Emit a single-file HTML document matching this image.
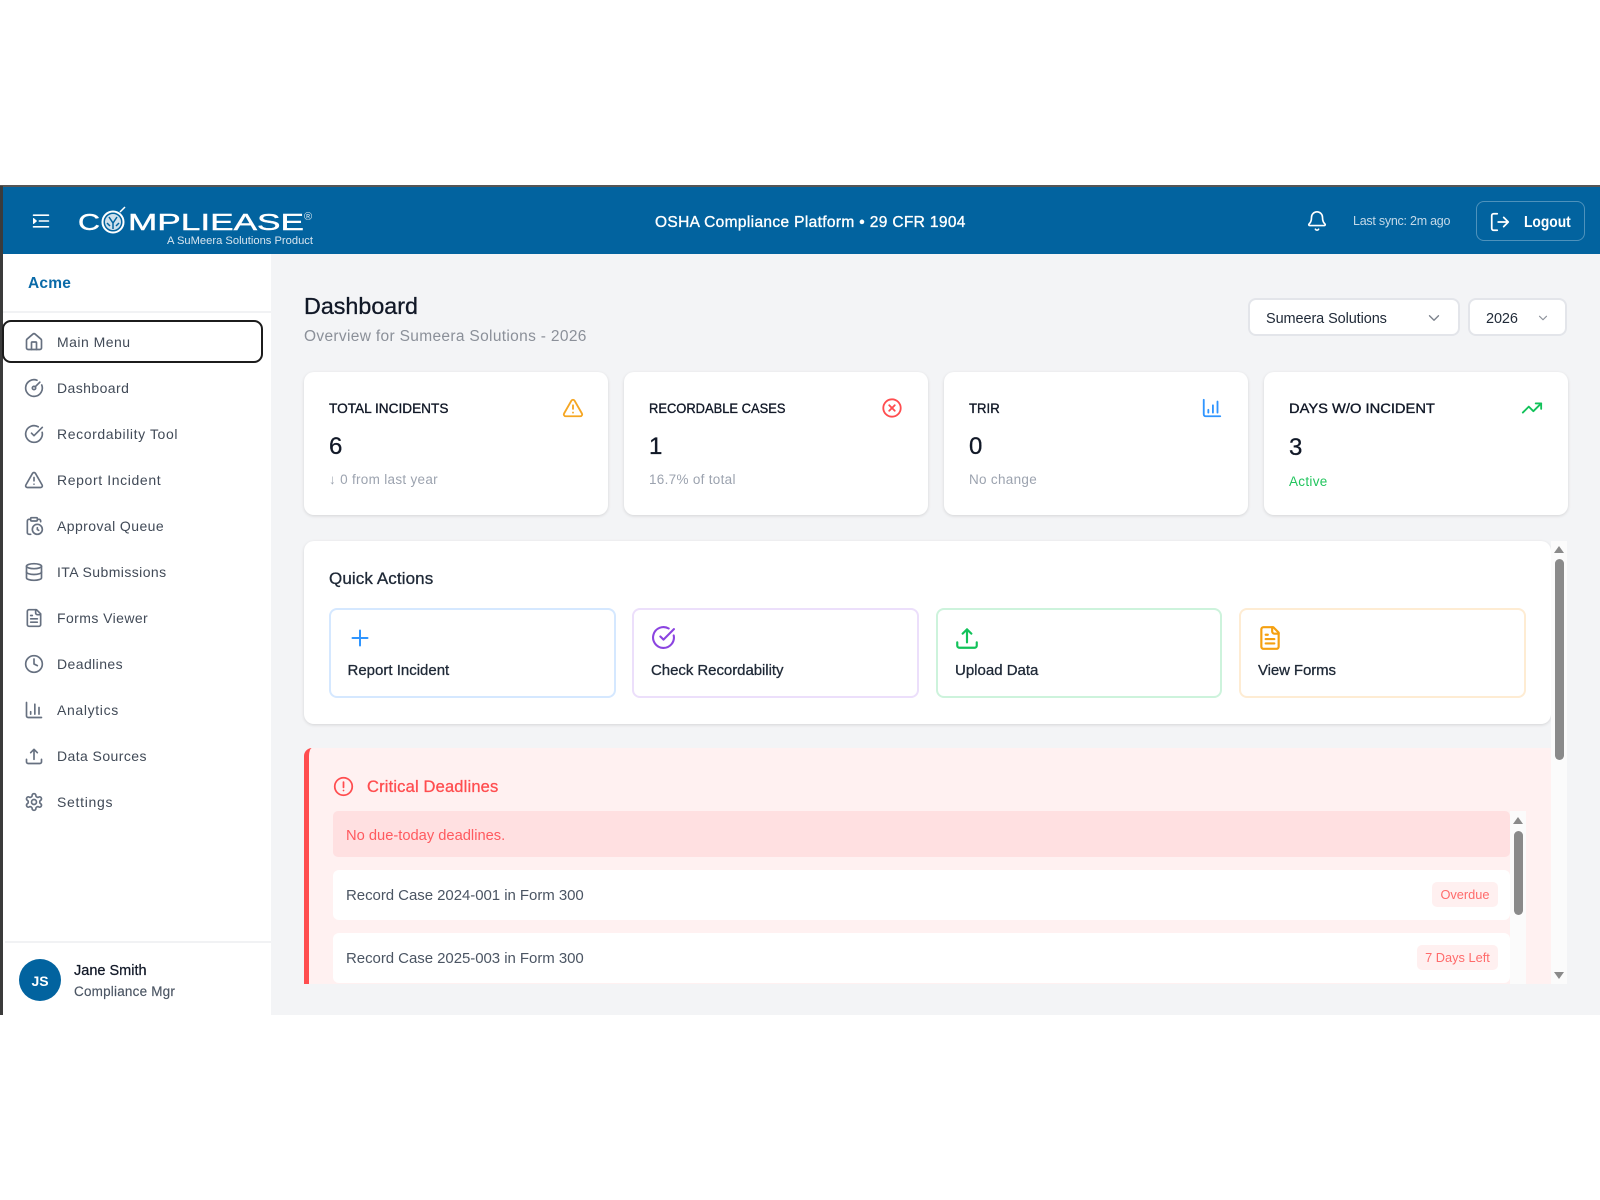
<!DOCTYPE html>
<html lang="en">
<head>
<meta charset="utf-8">
<title>CompliEase Dashboard</title>
<style>
*{box-sizing:border-box;margin:0;padding:0}
html,body{width:1600px;height:1200px;background:#fff;overflow:hidden}
body{position:relative;font-family:"Liberation Sans",sans-serif;color:#1f2937;filter:blur(.35px)}
.a{position:absolute}
.t{position:absolute;line-height:20px;white-space:nowrap;transform-origin:left center}
svg.i{position:absolute;fill:none;stroke:currentColor;stroke-width:2;stroke-linecap:round;stroke-linejoin:round}
.nav{font-size:14px;letter-spacing:.42px;color:#414a57}
.nico{color:#667080;width:20px;height:20px;left:24px}
.card{position:absolute;top:372px;width:304px;height:143px;background:#fff;border-radius:10px;box-shadow:0 1px 3px rgba(0,0,0,.13)}
.lab{font-size:14px;font-weight:400;color:#111827;-webkit-text-stroke:.35px #111827}
.num{font-size:24px;color:#111827;-webkit-text-stroke:.3px #111827}
.sub{font-size:13.5px;color:#9ca3af;letter-spacing:.3px}
.qa{position:absolute;top:608px;height:90px;background:#fff;border:2px solid;border-radius:8px}
.ql{font-size:15px;color:#1f2937;-webkit-text-stroke:.3px #1f2937}
.row{position:absolute;left:333px;width:1177px;height:50px;background:#fff;border-radius:6px}
.rt{font-size:15px;color:#4b5563;letter-spacing:-.05px}
.badge{position:absolute;height:25px;background:#fff0f0;border-radius:5px;color:#ff6b6b;font-size:12.8px;line-height:26px;text-align:center}
.sel{position:absolute;top:298px;height:38px;background:#fff;border:2px solid #e3e5ea;border-radius:8px}
.st{font-size:14.5px;color:#1f2937;letter-spacing:-.1px}
</style>
</head>
<body>
<!-- app frame -->
<div class="a" style="left:0;top:186px;width:1600px;height:829px;background:#f3f4f6"></div>
<div class="a" style="left:0;top:185px;width:1600px;height:2px;background:#555"></div>
<!-- sidebar -->
<div class="a" style="left:0;top:254px;width:271px;height:761px;background:#fff"></div>
<div class="a" style="left:0;top:186px;width:2.5px;height:829px;background:#3b3b3b"></div>
<!-- header -->
<div class="a" style="left:2.5px;top:187px;width:1597.5px;height:67px;background:#02639f"></div>

<svg class="i" style="left:31px;top:211px;color:#fff;stroke-width:1.9" width="20" height="20" viewBox="0 0 24 24"><path d="M3 5h18M10 12h11M3 19h18"/><path d="M3 9l3.5 3L3 15z" fill="#fff" stroke-width="1.2"/></svg>

<!-- logo -->
<svg class="a" style="left:70px;top:200px" width="260" height="50" viewBox="0 0 260 50">
  <g fill="#fff" stroke="#fff" stroke-width=".4" font-family="'Liberation Sans',sans-serif" font-size="23.5">
    <text x="8" y="30" textLength="22" lengthAdjust="spacingAndGlyphs">C</text>
    <text x="58" y="30" textLength="176" lengthAdjust="spacingAndGlyphs">MPLIEASE</text>
  </g>
  <circle cx="43" cy="22" r="10.5" fill="none" stroke="#fff" stroke-width="2"/>
  <circle cx="43" cy="22" r="8" fill="#cfe0ec"/>
  <path d="M39 17l4 6 4-6M43 23v6M37 23l3 3M49 23l-3 3" stroke="#02639f" stroke-width="1.5" fill="none"/>
  <path d="M50 12l5-5" stroke="#fff" stroke-width="1.5"/>
  <text x="234" y="20" fill="#dce8f1" font-family="'Liberation Sans',sans-serif" font-size="11">®</text>
  <text x="97" y="44" fill="#d8e5ef" font-family="'Liberation Sans',sans-serif" font-size="11" textLength="146" lengthAdjust="spacingAndGlyphs">A SuMeera Solutions Product</text>
</svg>

<div class="t" style="left:655px;top:213px;font-size:15.5px;color:#fff;-webkit-text-stroke:.35px #fff;letter-spacing:.35px">OSHA Compliance Platform • 29 CFR 1904</div>

<svg class="i" style="left:1306px;top:210px;color:#fff;stroke-width:1.8" width="22" height="22" viewBox="0 0 24 24"><path d="M10.268 21a2 2 0 0 0 3.464 0"/><path d="M3.262 15.326A1 1 0 0 0 4 17h16a1 1 0 0 0 .74-1.673C19.41 13.956 18 12.499 18 8A6 6 0 0 0 6 8c0 4.499-1.411 5.956-2.738 7.326"/></svg>
<div class="t" style="left:1353px;top:211px;font-size:12.5px;color:#c4d9e8;letter-spacing:-.25px">Last sync: 2m ago</div>
<div class="a" style="left:1476px;top:201px;width:109px;height:40px;border:1.5px solid rgba(255,255,255,.3);border-radius:8px"></div>
<svg class="i" style="left:1489px;top:211px;color:#fff;stroke-width:1.9" width="22" height="22" viewBox="0 0 24 24"><path d="M9 3H5a2 2 0 0 0-2 2v14a2 2 0 0 0 2 2h4"/><path d="M10 12h11M16 7l5 5-5 5"/></svg>
<div class="t" style="left:1524px;top:213px;font-size:15.5px;color:#fff;font-weight:700;transform:scaleX(.89)">Logout</div>

<!-- sidebar content -->
<div class="t" style="left:28px;top:274px;font-size:15.5px;font-weight:700;color:#0a6aa8;letter-spacing:.2px">Acme</div>
<div class="a" style="left:3px;top:311px;width:268px;height:2px;background:#f1f2f4"></div>
<div class="a" style="left:2px;top:320px;width:261px;height:43px;border:2px solid #1c1c1c;border-radius:9px"></div>

<div class="t nav" style="left:57px;top:332px;letter-spacing:.47px">Main Menu</div>
<div class="t nav" style="left:57px;top:378px">Dashboard</div>
<div class="t nav" style="left:57px;top:424px;letter-spacing:.6px">Recordability Tool</div>
<div class="t nav" style="left:57px;top:470px;letter-spacing:.62px">Report Incident</div>
<div class="t nav" style="left:57px;top:516px">Approval Queue</div>
<div class="t nav" style="left:57px;top:562px">ITA Submissions</div>
<div class="t nav" style="left:57px;top:608px">Forms Viewer</div>
<div class="t nav" style="left:57px;top:654px">Deadlines</div>
<div class="t nav" style="left:57px;top:700px;letter-spacing:.65px">Analytics</div>
<div class="t nav" style="left:57px;top:746px">Data Sources</div>
<div class="t nav" style="left:57px;top:792px;letter-spacing:.7px">Settings</div>

<svg class="i nico" style="top:332px" viewBox="0 0 24 24"><path d="M15 21v-8a1 1 0 0 0-1-1h-4a1 1 0 0 0-1 1v8"/><path d="M3 10a2 2 0 0 1 .709-1.528l7-5.999a2 2 0 0 1 2.582 0l7 5.999A2 2 0 0 1 21 10v9a2 2 0 0 1-2 2H5a2 2 0 0 1-2-2z"/></svg>
<svg class="i nico" style="top:378px" viewBox="0 0 24 24"><path d="M15.6 2.7a10 10 0 1 0 5.7 5.7"/><circle cx="12" cy="12" r="2"/><path d="M13.4 10.6 19 5"/></svg>
<svg class="i nico" style="top:424px" viewBox="0 0 24 24"><path d="M21.801 10A10 10 0 1 1 17 3.335"/><path d="m9 11 3 3L22 4"/></svg>
<svg class="i nico" style="top:470px" viewBox="0 0 24 24"><path d="m21.73 18-8-14a2 2 0 0 0-3.48 0l-8 14A2 2 0 0 0 4 21h16a2 2 0 0 0 1.73-3"/><path d="M12 9v4M12 17h.01"/></svg>
<svg class="i nico" style="top:516px" viewBox="0 0 24 24"><path d="M16 14v2.2l1.6 1"/><path d="M16 4h2a2 2 0 0 1 2 2v.832"/><path d="M8 4H6a2 2 0 0 0-2 2v14a2 2 0 0 0 2 2h2"/><circle cx="16" cy="16" r="6"/><rect x="8" y="2" width="8" height="4" rx="1"/></svg>
<svg class="i nico" style="top:562px" viewBox="0 0 24 24"><ellipse cx="12" cy="5" rx="9" ry="3"/><path d="M3 5V19A9 3 0 0 0 21 19V5"/><path d="M3 12A9 3 0 0 0 21 12"/></svg>
<svg class="i nico" style="top:608px" viewBox="0 0 24 24"><path d="M15 2H6a2 2 0 0 0-2 2v16a2 2 0 0 0 2 2h12a2 2 0 0 0 2-2V7Z"/><path d="M14 2v4a2 2 0 0 0 2 2h4"/><path d="M10 9H8M16 13H8M16 17H8"/></svg>
<svg class="i nico" style="top:654px" viewBox="0 0 24 24"><circle cx="12" cy="12" r="10"/><path d="M12 6v6l4 2"/></svg>
<svg class="i nico" style="top:700px" viewBox="0 0 24 24"><path d="M3 3v16a2 2 0 0 0 2 2h16"/><path d="M18 17V9M13 17V5M8 17v-3"/></svg>
<svg class="i nico" style="top:746px" viewBox="0 0 24 24"><path d="M3 16v3a2 2 0 0 0 2 2h14a2 2 0 0 0 2-2v-3"/><path d="M12 16V4M8 8l4-4 4 4"/></svg>
<svg class="i nico" style="top:792px" viewBox="0 0 24 24"><path d="M12.22 2h-.44a2 2 0 0 0-2 2v.18a2 2 0 0 1-1 1.73l-.43.25a2 2 0 0 1-2 0l-.15-.08a2 2 0 0 0-2.73.73l-.22.38a2 2 0 0 0 .73 2.73l.15.1a2 2 0 0 1 1 1.72v.51a2 2 0 0 1-1 1.74l-.15.09a2 2 0 0 0-.73 2.73l.22.38a2 2 0 0 0 2.73.73l.15-.08a2 2 0 0 1 2 0l.43.25a2 2 0 0 1 1 1.73V20a2 2 0 0 0 2 2h.44a2 2 0 0 0 2-2v-.18a2 2 0 0 1 1-1.73l.43-.25a2 2 0 0 1 2 0l.15.08a2 2 0 0 0 2.73-.73l.22-.39a2 2 0 0 0-.73-2.73l-.15-.08a2 2 0 0 1-1-1.74v-.5a2 2 0 0 1 1-1.74l.15-.09a2 2 0 0 0 .73-2.73l-.22-.38a2 2 0 0 0-2.73-.73l-.15.08a2 2 0 0 1-2 0l-.43-.25a2 2 0 0 1-1-1.73V4a2 2 0 0 0-2-2z"/><circle cx="12" cy="12" r="3"/></svg>

<div class="a" style="left:5px;top:941px;width:266px;height:2px;background:#f1f2f4"></div>
<div class="a" style="left:19px;top:959px;width:42px;height:42px;border-radius:50%;background:#02639f;color:#fff;font-size:14px;font-weight:700;line-height:44px;text-align:center">JS</div>
<div class="t" style="left:74px;top:961px;font-size:14.5px;color:#111827;-webkit-text-stroke:.25px #111827">Jane Smith</div>
<div class="t" style="left:74px;top:982px;font-size:13.5px;color:#4b5563;letter-spacing:.2px;-webkit-text-stroke:.15px #4b5563">Compliance Mgr</div>

<!-- page head -->
<div class="t" style="left:304px;top:296px;font-size:23.3px;color:#111827;-webkit-text-stroke:.3px #111827">Dashboard</div>
<div class="t" style="left:304px;top:327px;font-size:15.5px;color:#8b9099;letter-spacing:.33px">Overview for Sumeera Solutions - 2026</div>

<div class="sel" style="left:1248px;width:212px"></div>
<div class="t st" style="left:1266px;top:309px">Sumeera Solutions</div>
<svg class="i" style="left:1425px;top:309px;color:#7b818b;stroke-width:1.8" width="18" height="18" viewBox="0 0 24 24"><path d="m6 9 6 6 6-6"/></svg>
<div class="sel" style="left:1468px;width:99px"></div>
<div class="t st" style="left:1486px;top:309px">2026</div>
<svg class="i" style="left:1536px;top:311px;color:#8b9099;stroke-width:2" width="14" height="14" viewBox="0 0 24 24"><path d="m6 9 6 6 6-6"/></svg>

<!-- stat cards -->
<div class="card" style="left:304px"></div>
<div class="card" style="left:624px"></div>
<div class="card" style="left:944px"></div>
<div class="card" style="left:1264px"></div>

<div class="t lab" style="left:329px;top:398px;transform:scaleX(.974)">TOTAL INCIDENTS</div>
<div class="t num" style="left:329px;top:437px">6</div>
<div class="t sub" style="left:329px;top:470px">↓ 0 from last year</div>
<svg class="i" style="left:562px;top:397px;color:#f5a623" width="22" height="22" viewBox="0 0 24 24"><path d="m21.73 18-8-14a2 2 0 0 0-3.48 0l-8 14A2 2 0 0 0 4 21h16a2 2 0 0 0 1.73-3"/><path d="M12 9v4M12 17h.01"/></svg>

<div class="t lab" style="left:649px;top:398px;transform:scaleX(.923)">RECORDABLE CASES</div>
<div class="t num" style="left:649px;top:437px">1</div>
<div class="t sub" style="left:649px;top:470px">16.7% of total</div>
<svg class="i" style="left:881px;top:397px;color:#ff4d4f" width="22" height="22" viewBox="0 0 24 24"><circle cx="12" cy="12" r="9.5"/><path d="m15 9-6 6M9 9l6 6"/></svg>

<div class="t lab" style="left:969px;top:398px;transform:scaleX(.94)">TRIR</div>
<div class="t num" style="left:969px;top:437px">0</div>
<div class="t sub" style="left:969px;top:470px">No change</div>
<svg class="i" style="left:1201px;top:397px;color:#2f95ff" width="22" height="22" viewBox="0 0 24 24"><path d="M3 3v16a2 2 0 0 0 2 2h16"/><path d="M18 17V5M13 17V9M8 17v-3"/></svg>

<div class="t lab" style="left:1289px;top:398px;transform:scaleX(1.05)">DAYS W/O INCIDENT</div>
<div class="t num" style="left:1289px;top:438px">3</div>
<div class="t sub" style="left:1289px;top:472px;color:#22c55e">Active</div>
<svg class="i" style="left:1521px;top:397px;color:#12c25a" width="22" height="22" viewBox="0 0 24 24"><path d="M22 7 13.5 15.5 8.5 10.5 2 17"/><path d="M16 7h6v6"/></svg>

<!-- quick actions -->
<div class="a" style="left:304px;top:541px;width:1247px;height:183px;background:#fff;border-radius:10px;box-shadow:0 1px 3px rgba(0,0,0,.13)"></div>
<div class="t" style="left:329px;top:569px;font-size:17px;color:#1f2937;-webkit-text-stroke:.3px #1f2937;letter-spacing:.1px">Quick Actions</div>

<div class="qa" style="left:329px;width:287px;border-color:#d5e8ff"></div>
<div class="qa" style="left:632px;width:287px;border-color:#ecdffb"></div>
<div class="qa" style="left:936px;width:286px;border-color:#cdf3dc"></div>
<div class="qa" style="left:1239px;width:287px;border-color:#feecd3"></div>

<svg class="i" style="left:348px;top:626px;color:#2f95ff" width="24" height="24" viewBox="0 0 24 24"><path d="M12 4.5v15M4.5 12h15"/></svg>
<svg class="i" style="left:651px;top:625px;color:#8b44e0" width="25" height="25" viewBox="0 0 24 24"><path d="M21.801 10A10 10 0 1 1 17 3.335"/><path d="m9 11 3 3L22 4"/></svg>
<svg class="i" style="left:954px;top:625px;color:#12c25a" width="26" height="26" viewBox="0 0 24 24"><path d="M3 16v3a2 2 0 0 0 2 2h14a2 2 0 0 0 2-2v-3"/><path d="M12 16V4M8 8l4-4 4 4"/></svg>
<svg class="i" style="left:1257px;top:625px;color:#f5a010" width="26" height="26" viewBox="0 0 24 24"><path d="M15 2H6a2 2 0 0 0-2 2v16a2 2 0 0 0 2 2h12a2 2 0 0 0 2-2V7Z"/><path d="M14 2v4a2 2 0 0 0 2 2h4"/><path d="M10 9H8M16 13H8M16 17H8"/></svg>

<div class="t ql" style="left:347.5px;top:661px">Report Incident</div>
<div class="t ql" style="left:651px;top:661px;letter-spacing:-.05px">Check Recordability</div>
<div class="t ql" style="left:955px;top:661px">Upload Data</div>
<div class="t ql" style="left:1258px;top:661px;letter-spacing:-.1px">View Forms</div>

<!-- critical deadlines -->
<div class="a" style="left:304px;top:748px;width:1247px;height:236px;background:#fff1f1;border-left:5px solid #ff4d4f;border-top-left-radius:8px"></div>
<svg class="i" style="left:333px;top:776px;color:#ff4d4f" width="21" height="21" viewBox="0 0 24 24"><circle cx="12" cy="12" r="10"/><path d="M12 7v6M12 16.5h.01"/></svg>
<div class="t" style="left:367px;top:777px;font-size:16.5px;color:#ff4d4f;-webkit-text-stroke:.3px #ff4d4f;letter-spacing:.17px">Critical Deadlines</div>

<div class="a" style="left:333px;top:811px;width:1177px;height:46px;background:#ffe0e1;border-radius:5px"></div>
<div class="t" style="left:346px;top:826px;font-size:14.7px;color:#ff5a5f">No due-today deadlines.</div>
<div class="row" style="top:870px"></div>
<div class="t rt" style="left:346px;top:886px">Record Case 2024-001 in Form 300</div>
<div class="badge" style="left:1432px;top:882px;width:66px">Overdue</div>
<div class="row" style="top:933px"></div>
<div class="t rt" style="left:346px;top:949px">Record Case 2025-003 in Form 300</div>
<div class="badge" style="left:1417px;top:945px;width:81px">7 Days Left</div>

<!-- inner scrollbar -->
<div class="a" style="left:1510px;top:811px;width:16px;height:173px;background:#fbfbfb"></div>
<div class="a" style="left:1513.5px;top:831px;width:9px;height:84px;background:#8a8a8a;border-radius:5px"></div>
<svg class="a" style="left:1512px;top:816px" width="12" height="9" viewBox="0 0 12 9"><path d="M6 1l5 7H1z" fill="#8a8a8a"/></svg>

<!-- outer scrollbar -->
<div class="a" style="left:1551px;top:541px;width:16px;height:443px;background:#fbfbfb"></div>
<div class="a" style="left:1555px;top:559px;width:9px;height:201px;background:#8a8a8a;border-radius:5px"></div>
<svg class="a" style="left:1553px;top:545px" width="12" height="9" viewBox="0 0 12 9"><path d="M6 1l5 7H1z" fill="#8a8a8a"/></svg>
<svg class="a" style="left:1553px;top:971px" width="12" height="9" viewBox="0 0 12 9"><path d="M6 8l5-7H1z" fill="#8a8a8a"/></svg>
</body>
</html>
